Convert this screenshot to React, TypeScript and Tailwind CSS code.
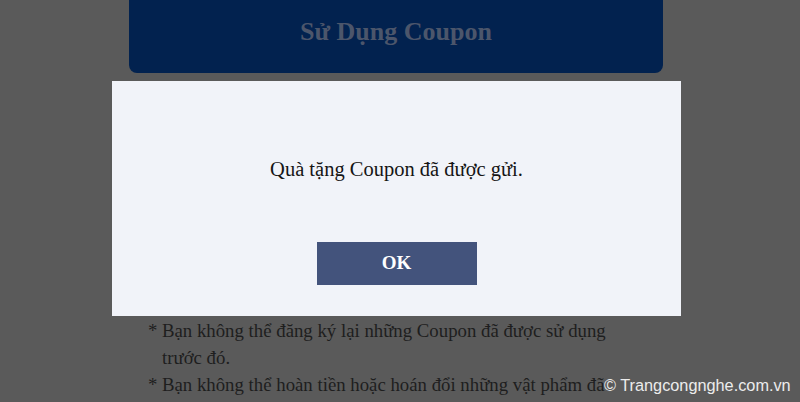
import React from "react";

export default function App() {
  return (
    <div className="relative w-[800px] h-[402px] overflow-hidden bg-[#5a5a5a] font-['Liberation_Serif',serif]">
      <div className="ml-[129px] w-[534px]">
        <div className="h-[73px] rounded-b-[8px] bg-[#02224f] flex items-center justify-center">
          <h1 className="text-[26px] font-bold text-[#4c566b] leading-none mt-[-10px]">Sử Dụng Coupon</h1>
        </div>
        <ul className="mt-[244px] ml-[19px] text-[18.8px] leading-[27px] text-[#1e1e1e]">
          <li className="flex">
            <span className="w-[14px] shrink-0">*</span>
            <span>Bạn không thể đăng ký lại những Coupon đã được sử dụng<br />trước đó.</span>
          </li>
          <li className="flex">
            <span className="w-[14px] shrink-0">*</span>
            <span>Bạn không thể hoàn tiền hoặc hoán đổi những vật phẩm đã</span>
          </li>
        </ul>
      </div>

      <div className="absolute left-[112px] top-[81px] w-[569px] h-[235px] bg-[#f1f3f9] flex flex-col items-center">
        <p className="mt-[74px] text-[20.5px] leading-[28px] text-[#151515]">Quà tặng Coupon đã được gửi.</p>
        <button className="mt-[59px] w-[160px] h-[43px] bg-[#43537c] text-white text-[19px] font-bold">OK</button>
      </div>

      <div className="absolute left-[604px] top-[373px] text-[16.3px] text-[#ececec] font-['Liberation_Sans',sans-serif]">
        © Trangcongnghe.com.vn
      </div>
    </div>
  );
}
